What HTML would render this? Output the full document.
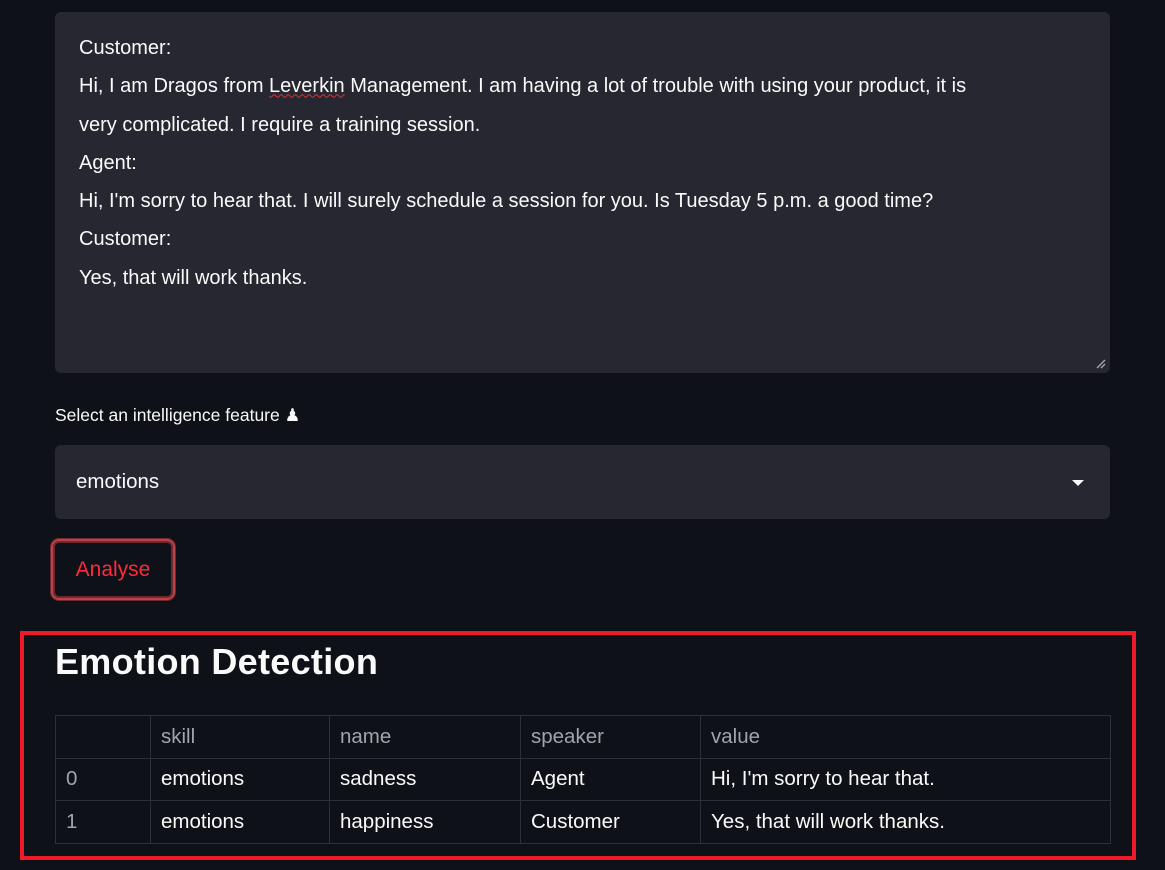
<!DOCTYPE html>
<html><head><style>
body{margin:0;background:#0e1117;width:1165px;height:870px;overflow:hidden;font-family:"Liberation Sans",sans-serif;color:#fafafa;position:relative}
.ta{position:absolute;left:55px;top:12px;width:1055px;height:361px;background:#262730;border-radius:6px}
.ta div{position:absolute;left:24px;top:17px;font-size:20px;line-height:38.3px;width:1010px;white-space:nowrap}
.grip{position:absolute;right:4px;bottom:4px;width:10px;height:10px}
.lbl{position:absolute;left:55px;top:405px;font-size:17.5px}
.sel{position:absolute;left:55px;top:445px;width:1055px;height:74px;background:#262730;border-radius:6px}
.sel span{position:absolute;left:21px;top:25px;font-size:20.5px}
.arr{position:absolute;right:26px;top:35px;width:0;height:0;border-left:6px solid transparent;border-right:6px solid transparent;border-top:6px solid #fafafa}
.btn{position:absolute;left:51px;top:539px;width:124px;height:61px;border:2px solid #c0404a;border-radius:8px;box-shadow:0 0 0 2px #6a2a30 inset,0 0 0 1px #6a2a30;box-sizing:border-box;color:#ff2b3b;font-size:21px;text-align:center;line-height:57px}
.box{position:absolute;left:20px;top:631px;width:1116px;height:229px;border:4px solid #ee1c2b;box-sizing:border-box}
h1{position:absolute;left:55px;top:641px;margin:0;font-size:36px;font-weight:bold;letter-spacing:0.3px}
table{position:absolute;left:55px;top:715px;border-collapse:collapse;font-size:20.5px}
td{border:1px solid #2e3039;height:42.5px;padding:0 0 0 10px;box-sizing:border-box}
tr.h td{color:#a3a3ab}
td.i{color:#a3a3ab}
</style></head><body>
<div class="ta"><div>Customer:<br>Hi, I am Dragos from <span style="text-decoration:underline wavy #d33;text-decoration-thickness:1px">Leverkin</span> Management. I am having a lot of trouble with using your product, it is<br>very complicated. I require a training session.<br>Agent:<br>Hi, I'm sorry to hear that. I will surely schedule a session for you. Is Tuesday 5 p.m. a good time?<br>Customer:<br>Yes, that will work thanks.</div>
<svg class="grip" viewBox="0 0 10 10"><path d="M1 9L9 1M5 9L9 5" stroke="#aaa" stroke-width="1.3"/></svg></div>
<div class="lbl">Select an intelligence feature ♟</div>
<div class="sel"><span>emotions</span><div class="arr"></div></div>
<div class="btn">Analyse</div>
<div class="box"></div>
<h1>Emotion Detection</h1>
<table>
<tr class="h"><td style="width:95px"></td><td style="width:179px">skill</td><td style="width:191px">name</td><td style="width:180px">speaker</td><td style="width:410px">value</td></tr>
<tr><td class="i">0</td><td>emotions</td><td>sadness</td><td>Agent</td><td>Hi, I'm sorry to hear that.</td></tr>
<tr><td class="i">1</td><td>emotions</td><td>happiness</td><td>Customer</td><td>Yes, that will work thanks.</td></tr>
</table>
</body></html>
